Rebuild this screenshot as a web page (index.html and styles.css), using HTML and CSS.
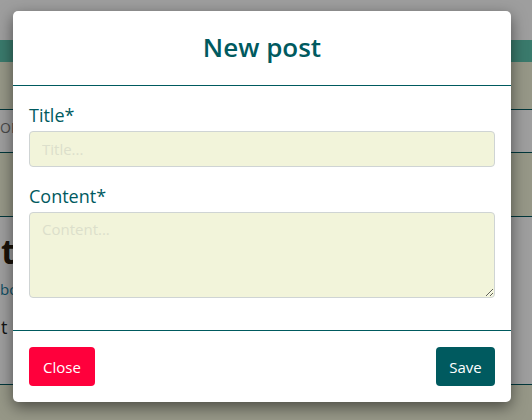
FILE: index.html
```html
<!DOCTYPE html>
<html>
<head>
<meta charset="utf-8">
<link rel="stylesheet" href="styles.css">
</head>
<body>
<div class="page">
  <div class="top"></div>
  <div class="navbar"></div>
  <div class="hero"></div>
  <div class="tabs"><span class="tabs-text">OP</span></div>
  <div class="band"></div>
  <div class="content">
    <div class="heading">t</div>
    <div class="link">bo</div>
    <div class="text">t i</div>
  </div>
  <div class="bottom"></div>
</div>
<div class="overlay"></div>
<div class="modal">
  <div class="modal-header"><h2 class="modal-title">New post</h2></div>
  <div class="modal-body">
    <label class="field-label">Title*</label>
    <input class="field-input" type="text" placeholder="Title...">
    <label class="field-label second">Content*</label>
    <textarea class="field-area" placeholder="Content..."></textarea>
  </div>
  <div class="modal-footer">
    <button class="btn btn-close">Close</button>
    <button class="btn btn-save">Save</button>
  </div>
</div>
</body>
</html>
```
FILE: styles.css
```css
* { box-sizing: border-box; }
html, body { margin: 0; padding: 0; }
body {
  width: 532px;
  height: 420px;
  overflow: hidden;
  background: #fff;
  font-family: "Open Sans", "Noto Sans", sans-serif;
  position: relative;
}
.page { display: flex; flex-direction: column; height: 420px; }
.top { height: 40px; background: #fff; }
.navbar { height: 22px; background: #5ec5ae; }
.hero { height: 48px; background: #f2f4da; border-bottom: 1px solid #005a5f; }
.tabs { height: 43px; background: #fff; border-bottom: 1px solid #005a5f; padding-top: 8px; }
.tabs-text { display: block; margin-left: 0; font-size: 14px; color: #777; letter-spacing: 0; }
.band { height: 64px; background: #f2f4da; border-bottom: 1px solid #005a5f; }
.content { height: 168px; background: #fff; border-bottom: 1px solid #005a5f; padding-top: 14px; }
.heading { margin-left: 1px; font-size: 34px; font-weight: 700; color: #2a1d10; line-height: 40px; }
.link { margin-left: 0; font-size: 15px; color: #1a7ea0; margin-top: 8px; }
.text { margin-left: 1px; font-size: 18px; color: #222; margin-top: 16px; }
.bottom { flex: 1; background: #f2f4da; }

.overlay {
  position: absolute;
  inset: 0;
  background: rgba(0, 0, 0, 0.38);
}
.modal {
  position: absolute;
  left: 13px;
  top: 11px;
  width: 498px;
  background: #fff;
  border-radius: 5px;
  box-shadow: 0 5px 15px rgba(0, 0, 0, 0.5);
  display: flex;
  flex-direction: column;
}
.modal-header {
  height: 75px;
  border-bottom: 1px solid #005a5f;
  display: flex;
  align-items: center;
  justify-content: center;
}
.modal-title {
  margin: 0;
  font-size: 26px;
  font-weight: 600;
  color: #005a5f;
  padding-bottom: 2px;
}
.modal-body {
  padding: 16px 16px 16px;
  display: flex;
  flex-direction: column;
  height: 245px;
  border-bottom: 1px solid #005a5f;
}
.field-label {
  font-size: 18px;
  color: #005a5f;
  line-height: 27px;
  height: 29px;
}
.field-label.second { margin-top: 16px; height: 29px; }
.field-input, .field-area {
  font-family: inherit;
  background: #f2f4da;
  border: 1px solid #cfd4d4;
  border-radius: 4px;
  font-size: 15px;
  padding: 6px 12px;
  color: #333;
  outline: none;
}
.field-input { height: 36px; }
.field-area { height: 86px; resize: vertical; }
.field-input::placeholder, .field-area::placeholder { color: #dcdfcb; }
.modal-footer {
  padding: 16px;
  display: flex;
  justify-content: space-between;
  align-items: center;
}
.btn {
  font-family: inherit;
  font-size: 15px;
  border: none;
  border-radius: 4px;
  color: #fff;
  height: 39px;
  padding: 0 12px;
}
.btn-close { background: #ff003c; width: 66px; }
.btn-save { background: #005a5f; width: 59px; }
```
